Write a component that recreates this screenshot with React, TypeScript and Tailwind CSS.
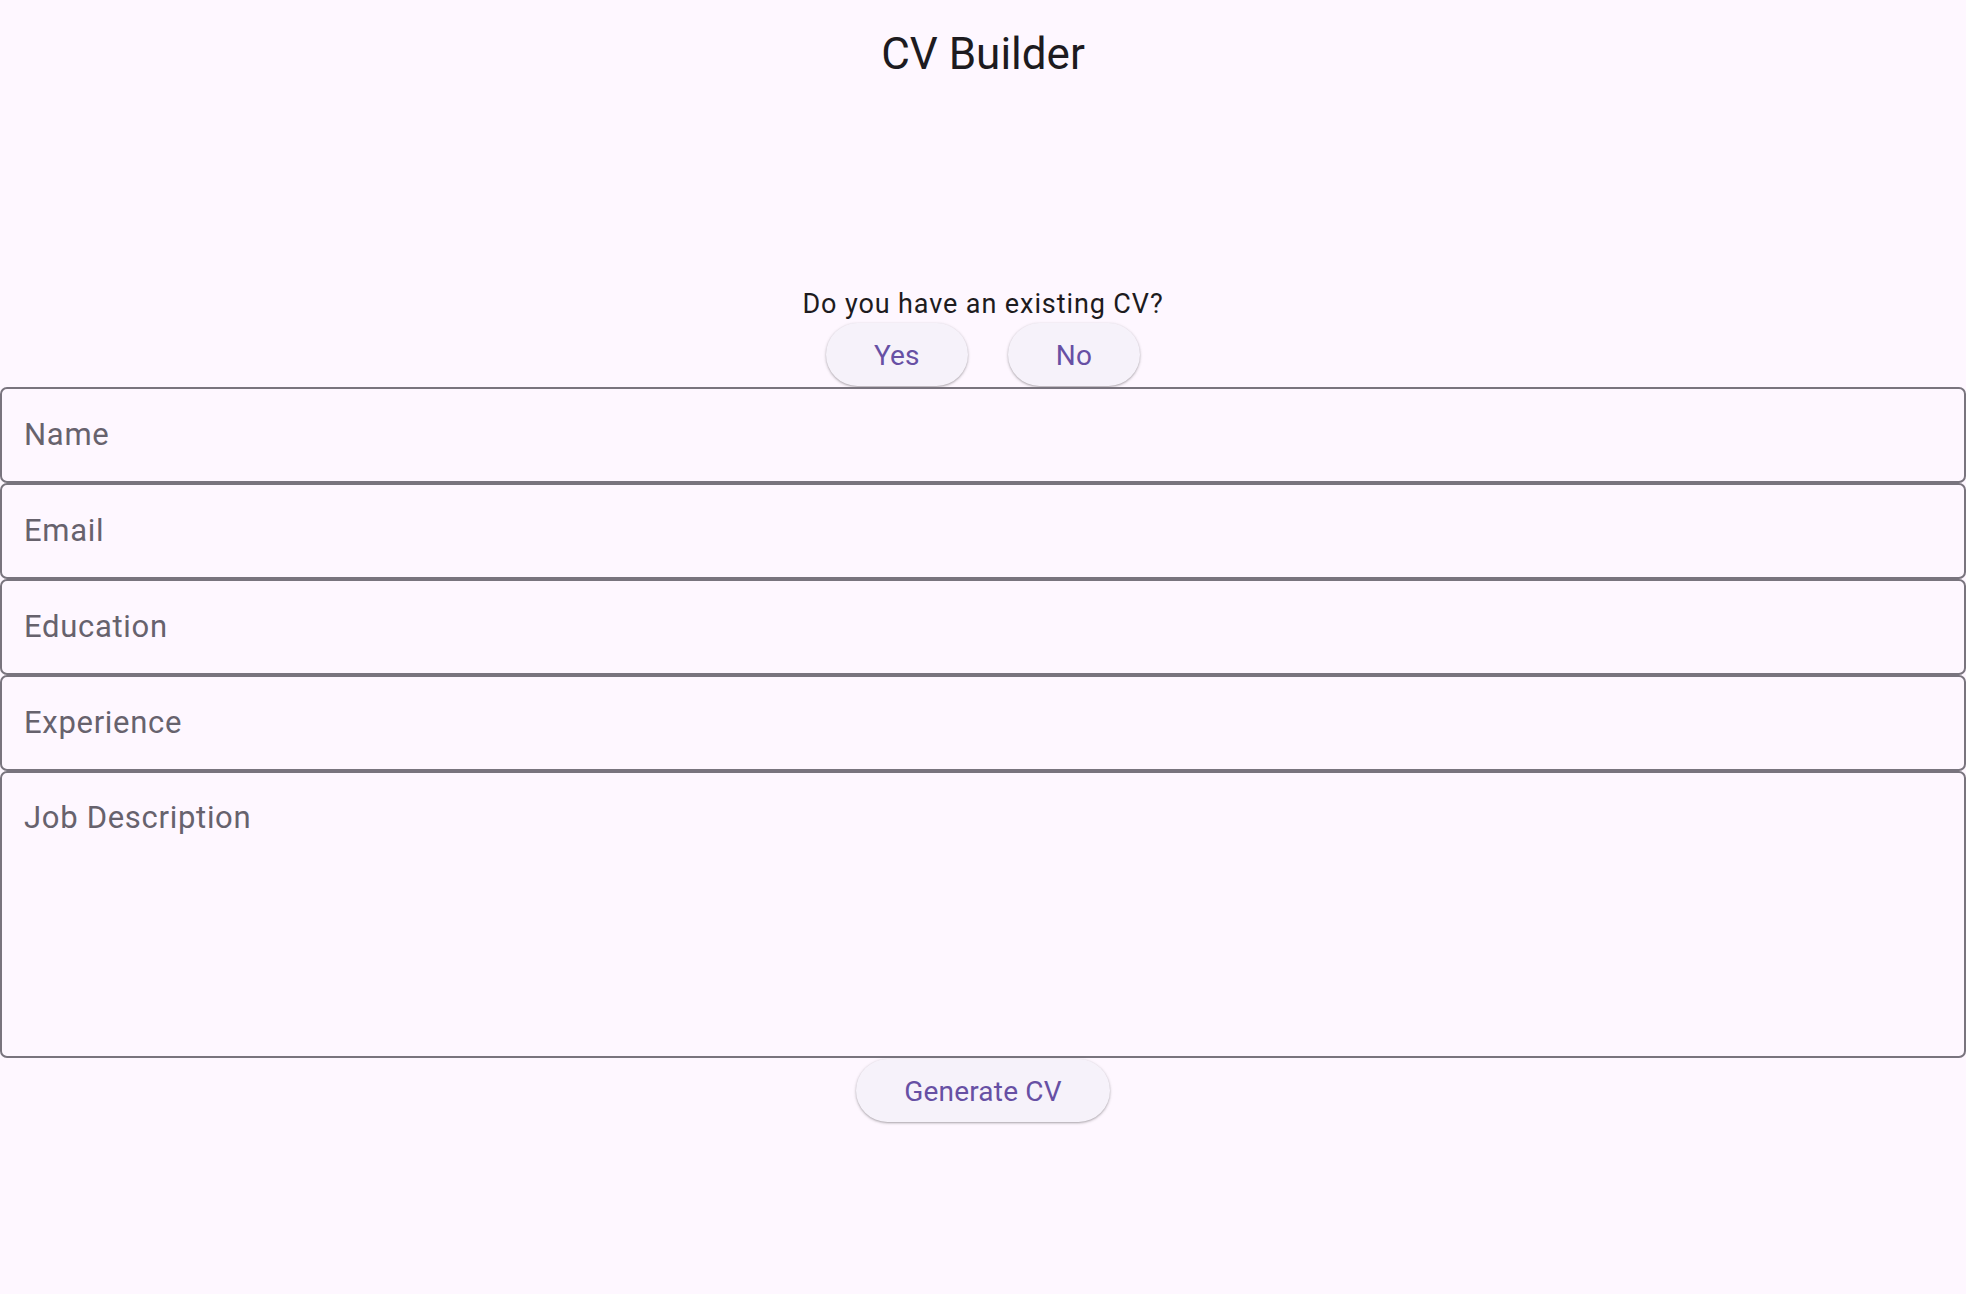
import { useState } from "react";

const fields = ["Name", "Email", "Education", "Experience"];

const PillButton = ({ label, onClick }: { label: string; onClick?: () => void }) => (
  <button
    type="button"
    onClick={onClick}
    className="h-[63px] rounded-full bg-[#F6F2FA] px-[48px] pt-[3px] text-[28px] leading-none tracking-[0.2px] text-[#6750A4] shadow-[0_1px_2px_rgba(0,0,0,0.25),0_1px_3px_1px_rgba(0,0,0,0.08)]"
  >
    {label}
  </button>
);

const CVBuilder = () => {
  const [hasCV, setHasCV] = useState<boolean | null>(null);
  const [values, setValues] = useState<Record<string, string>>({});
  const [jobDescription, setJobDescription] = useState("");

  const handleGenerate = () => {
    // real app would send this off to the generator
    console.log("Generating CV", { hasCV, ...values, jobDescription });
  };

  return (
    <div className="min-h-screen bg-[#FEF7FF] font-['Roboto',sans-serif] text-[#1D1B20]">
      {/* App bar */}
      <header className="flex h-[108px] items-center justify-center">
        <h1 className="text-[44px] leading-none">CV Builder</h1>
      </header>

      <main className="flex flex-col items-center pt-[178px]">
        {/* Existing CV question */}
        <p className="text-[27px] leading-[36px] tracking-[0.9px]">Do you have an existing CV?</p>
        <div className="flex h-[65px] items-start justify-center gap-[40px] pt-[1px]">
          <PillButton label="Yes" onClick={() => setHasCV(true)} />
          <PillButton label="No" onClick={() => setHasCV(false)} />
        </div>

        {/* Form */}
        <div className="flex w-full flex-col">
          {fields.map((field) => (
            <input
              key={field}
              type="text"
              placeholder={field}
              value={values[field] ?? ""}
              onChange={(e) => setValues((prev) => ({ ...prev, [field]: e.target.value }))}
              className="h-[96px] w-full rounded-[7px] border-2 border-[#79747E] bg-transparent px-[22px] pb-[2px] text-[31px] tracking-[0.7px] text-[#1D1B20] outline-none placeholder:text-[#67626D]"
            />
          ))}
          <textarea
            placeholder="Job Description"
            value={jobDescription}
            onChange={(e) => setJobDescription(e.target.value)}
            className="h-[287px] w-full resize-none rounded-[7px] border-2 border-[#79747E] bg-transparent px-[22px] pt-[27px] text-[31px] leading-[36px] tracking-[0.7px] text-[#1D1B20] outline-none placeholder:text-[#67626D]"
          />
        </div>

        <div className="flex h-[65px] items-start pt-[1px]">
          <PillButton label="Generate CV" onClick={handleGenerate} />
        </div>
      </main>
    </div>
  );
};

export default CVBuilder;
